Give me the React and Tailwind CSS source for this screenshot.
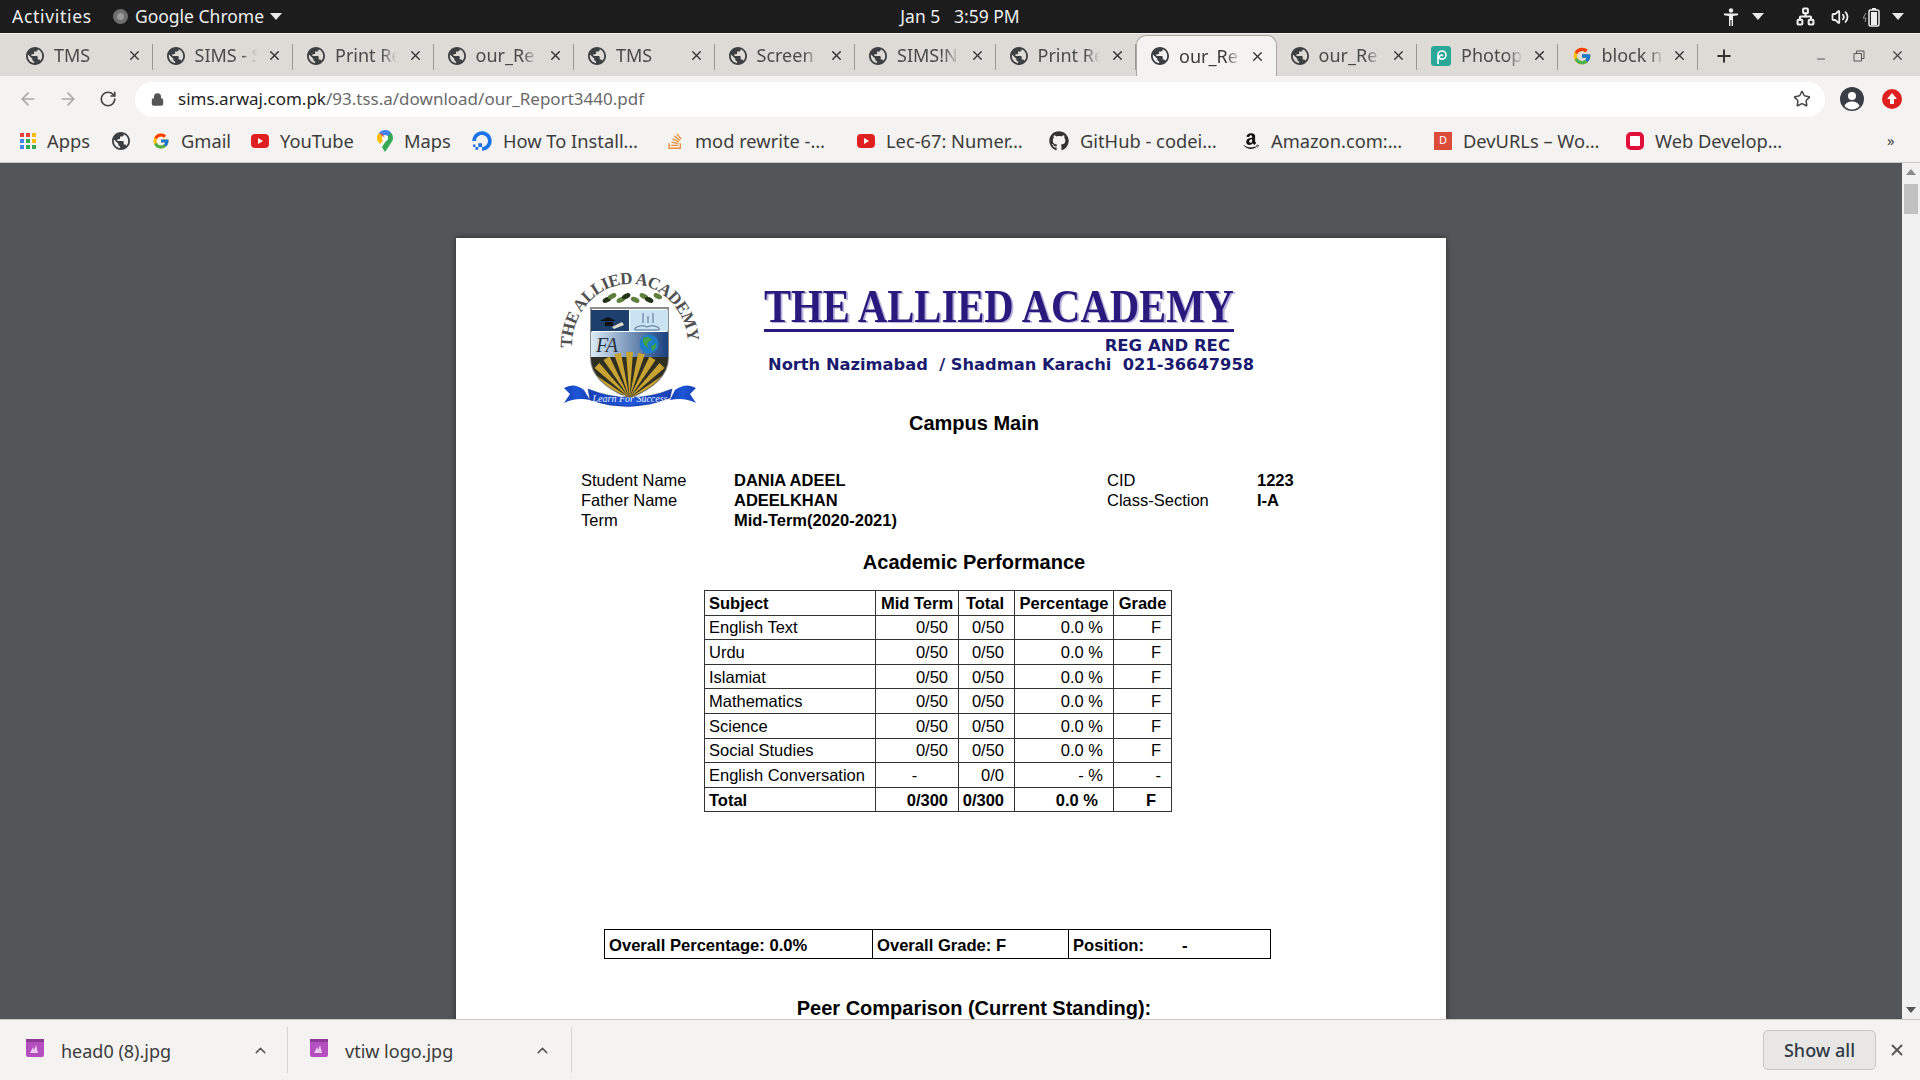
import { ArrowLeft, ArrowRight, RotateCw, Lock, Star, X, Plus, Minus, ChevronUp, Volume2, Network } from 'lucide-react'
import { FcGoogle } from 'react-icons/fc'
import { FaGithub, FaDigitalOcean, FaStackOverflow, FaAmazon } from 'react-icons/fa'

const tabs = ['TMS', 'SIMS - S', 'Print Re', 'our_Re', 'TMS', 'Screen', 'SIMS!N', 'Print Re', 'our_Re', 'our_Re', 'Photop', 'block n']

const rows = [
  ['English Text', '0/50', '0/50', '0.0 %', 'F'],
  ['Urdu', '0/50', '0/50', '0.0 %', 'F'],
  ['Islamiat', '0/50', '0/50', '0.0 %', 'F'],
  ['Mathematics', '0/50', '0/50', '0.0 %', 'F'],
  ['Science', '0/50', '0/50', '0.0 %', 'F'],
  ['Social Studies', '0/50', '0/50', '0.0 %', 'F'],
]

function Globe({ size = 18 }) {
  return (
    <svg width={size} height={size} viewBox="2 2 20 20" fill="#3c4043" className="shrink-0">
      <path d="M12 2C6.48 2 2 6.48 2 12s4.48 10 10 10 10-4.48 10-10S17.52 2 12 2zm-1 17.93c-3.95-.49-7-3.85-7-7.93 0-.62.08-1.21.21-1.79L9 15v1c0 1.1.9 2 2 2v1.93zm6.9-2.54c-.26-.81-1-1.39-1.9-1.39h-1v-3c0-.55-.45-1-1-1H8v-2h2c.55 0 1-.45 1-1V7h2c1.1 0 2-.9 2-2v-.41c2.93 1.19 5 4.06 5 7.41 0 2.08-.8 3.97-2.1 5.39z" />
    </svg>
  )
}

function Caret({ color = '#e8e8e8' }) {
  return (
    <svg width="12" height="7" viewBox="0 0 12 7" className="shrink-0">
      <path d="M0 0h12L6 7z" fill={color} />
    </svg>
  )
}

function YouTubeIcon() {
  return (
    <svg width="18" height="18" viewBox="0 0 18 18" className="shrink-0">
      <rect x="0" y="2" width="18" height="14" rx="4" fill="#e02020" />
      <path d="M7 6l5 3-5 3z" fill="#fff" />
    </svg>
  )
}

function TabIcon({ name }) {
  if (name === 'Photop') {
    return (
      <svg width="20" height="20" viewBox="0 0 20 20" className="shrink-0">
        <rect width="20" height="20" rx="3" fill="#2ba89a" />
        <path d="M7 18V9a4 4 0 1 1 4 4 2 2 0 1 1 1-3" fill="none" stroke="#fff" strokeWidth="1.6" />
      </svg>
    )
  }
  if (name === 'block n') {
    return <FcGoogle size={20} className="shrink-0" />
  }
  return <Globe />
}

function Tab({ name, active }) {
  return (
    <div className={active
      ? 'relative flex items-center h-full w-[140.500px] shrink-0 pl-[14px] pr-[11px] bg-[#f5f3f1] rounded-t-[10px] border border-b-0 border-[#a9a6a1]'
      : 'relative flex items-center h-full w-[140.500px] shrink-0 pl-[14px] pr-[11px]'}>
      <TabIcon name={name} />
      <span className={active
        ? "ml-[10px] w-[62px] overflow-hidden whitespace-nowrap text-[18px] text-[#3b3b3b] [mask-image:linear-gradient(to_right,black_75%,transparent)]"
        : "ml-[10px] w-[62px] overflow-hidden whitespace-nowrap text-[18px] text-[#4a4a4a] [mask-image:linear-gradient(to_right,black_75%,transparent)]"}>
        {name}
      </span>
      <X size={15} strokeWidth={2.2} className="ml-auto text-[#333]" />
      {!active && <span className="absolute right-0 top-[9px] h-[26px] w-px bg-[#9b9893]" />}
    </div>
  )
}

function Bookmark({ icon, label, width }) {
  return (
    <div className={`flex items-center gap-[11px] ${width} shrink-0`}>
      {icon}
      {label && <span className="whitespace-nowrap text-[18.300px] text-[#3c3c3c]">{label}</span>}
    </div>
  )
}

function AppsIcon() {
  const colors = ['#ea4335', '#ea4335', '#fbbc05', '#4285f4', '#34a853', '#fbbc05', '#4285f4', '#34a853', '#34a853']
  return (
    <div className="grid grid-cols-3 gap-[2px] w-[16px] shrink-0">
      {colors.map((c, i) => (
        <svg key={i} width="4" height="4"><rect width="4" height="4" fill={c} /></svg>
      ))}
    </div>
  )
}

function MapsIcon() {
  return (
    <svg width="16" height="22" viewBox="0 0 16 22" className="shrink-0">
      <path d="M8 0a8 8 0 0 1 8 8c0 2-1 3.5-2 5L8 22 5 17l6-9z" fill="#34a853" />
      <path d="M2 3l6 5-5 6C1 12 0 10 0 8c0-2 .8-3.700 2-5z" fill="#fbbc05" />
      <path d="M8 0c2.500 0 4.700 1.100 6.100 3L8 8 2 3C3.400 1.100 5.600 0 8 0z" fill="#4285f4" />
      <circle cx="8" cy="8" r="3" fill="#fff" />
      <path d="M2 3l6 5-2.500-4z" fill="#ea4335" />
    </svg>
  )
}

function ShelfIcon() {
  return (
    <svg width="20" height="20" viewBox="0 0 20 20" className="shrink-0 -mt-[4px]">
      <rect x="1" y="1" width="18" height="18" rx="2" fill="#b44fc0" />
      <rect x="1" y="1" width="18" height="3" fill="#8c3a96" />
      <path d="M5 15l3-6 1 3 2-5 2 8z" fill="#eec8f2" />
    </svg>
  )
}

function CrestLogo() {
  return (
    <svg width="160" height="150" viewBox="0 0 160 150" className="shrink-0">
      <defs>
        <path id="crest-arc" d="M22 88 A58 62 0 0 1 138 84" />
        <linearGradient id="fa-panel" x1="0" x2="1">
          <stop offset="0" stopColor="#dcecf6" />
          <stop offset="1" stopColor="#17407f" />
        </linearGradient>
        <linearGradient id="ribbon" x1="0" x2="1">
          <stop offset="0" stopColor="#1840b8" />
          <stop offset="0.5" stopColor="#1d56d8" />
          <stop offset="1" stopColor="#1840b8" />
        </linearGradient>
        <clipPath id="shield-clip">
          <path d="M41 48H118V98Q118 122 79.500 138Q41 122 41 98Z" />
        </clipPath>
      </defs>
      <text fontFamily="'Liberation Serif', serif" fontWeight="700" fontSize="17" fill="#505050">
        <textPath href="#crest-arc" textLength="186">THE ALLIED ACADEMY</textPath>
      </text>
      {[56, 63, 70, 77, 86, 93, 100, 107].map((x, i) => (
        <ellipse key={x} cx={x} cy={i % 2 ? 36 : 40} rx="4.500" ry="2.500" fill={i % 3 === 0 ? '#23331a' : '#5f7f3c'} transform={`rotate(${i < 4 ? -25 : 25} ${x} 38)`} />
      ))}
      <path d="M41 48H118V98Q118 122 79.500 138Q41 122 41 98Z" fill="#fff" stroke="#8d8d8d" strokeWidth="2" />
      <g clipPath="url(#shield-clip)">
        <rect x="41" y="50" width="38" height="21" fill="#1c3f6d" />
        <rect x="80" y="50" width="38" height="21" fill="#c9e3f3" />
        <rect x="41" y="72" width="77" height="25" fill="url(#fa-panel)" />
        <rect x="41" y="97" width="77" height="42" fill="#2f2f22" />
        {[-60, -45, -30, -15, 0, 15, 30, 45, 60].map(a => (
          <path key={a} d="M79.500 138L76 92H83Z" fill="#c9a332" transform={`rotate(${a} 79.500 138)`} />
        ))}
      </g>
      <path d="M50 61h16l-8-4zM55 62h8v4h-8z" fill="#111" />
      <path d="M62 67l10-5 2 3-10 4z" fill="#e4d8c8" />
      <path d="M85 68q7-4 12-1q6-3 12 1v2H85z" fill="none" stroke="#50708f" />
      <path d="M93 53v10M98 56v7M103 53v10" stroke="#50708f" />
      <text x="46" y="92" fontFamily="'Liberation Serif', serif" fontStyle="italic" fontSize="20" fill="#29323f">FA</text>
      <circle cx="99" cy="84" r="9.500" fill="#1f7ec8" />
      <path d="M93 78q6-3 9 2q-6 1-4 8q-6-3-5-10zM102 91q5-3 4-8q-3 3-5 3z" fill="#3ea04a" />
      <path d="M34 130Q24 122 14 128L20 134 14 143Q26 137 40 140Z" fill="url(#ribbon)" />
      <path d="M125 130Q136 122 146 128L140 134 146 143Q134 137 120 140Z" fill="url(#ribbon)" />
      <path d="M38 129Q80 146 122 129L120 138Q80 154 40 140Z" fill="url(#ribbon)" stroke="#0f2a82" strokeWidth="0.500" />
      <text x="80" y="142" textAnchor="middle" fontFamily="'Liberation Serif', serif" fontStyle="italic" fontSize="10" fill="#e8f0ff">Learn For Success</text>
    </svg>
  )
}

export default function App() {
  return (
    <div className="flex flex-col h-screen w-full overflow-hidden font-['Noto_Sans',sans-serif]">
      {/* Ubuntu top bar */}
      <div className="relative flex items-center h-[33px] shrink-0 bg-[#1c1c1c] text-[#eeeeee] text-[17.500px] pl-[12px]">
        <span className="tracking-[0.7px]">Activities</span>
        <span className="ml-[21px] w-[15px] h-[15px] rounded-full bg-[#9a9a9a] border-[4px] border-[#6f6f6f]" />
        <span className="ml-[7px]">Google Chrome</span>
        <span className="ml-[6px]"><Caret /></span>
        <span className="absolute left-1/2 -translate-x-1/2 whitespace-pre">Jan 5   3:59 PM</span>
        <div className="ml-auto flex items-center pr-[16px]">
          <svg width="14" height="18" viewBox="0 0 14 18">
            <circle cx="7" cy="2.500" r="2.200" fill="#eee" />
            <path d="M0 5.500h14v1.800L9 8v10H7.600v-6H6.400v6H5V8L0 7.300z" fill="#eee" />
          </svg>
          <span className="ml-[14px]"><Caret /></span>
          <Network size={19} strokeWidth={2.6} className="ml-[32px]" />
          <Volume2 size={18} strokeWidth={2.4} className="ml-[16px]" />
          <svg width="18" height="20" viewBox="0 0 18 20" className="ml-[14px]">
            <path d="M3 6L0 11h3l-1 4" fill="none" stroke="#999" />
            <rect x="6" y="3" width="10" height="16" rx="1.500" fill="none" stroke="#eee" strokeWidth="1.500" />
            <rect x="8" y="5" width="6" height="13" fill="#eee" />
            <rect x="9" y="1" width="4" height="2" fill="#eee" />
          </svg>
          <span className="ml-[11px]"><Caret /></span>
        </div>
      </div>

      {/* Tab strip */}
      <div className="flex items-center h-[43px] shrink-0 bg-[#dedbd7] border-t border-[#efefef] pl-[12px] pt-px">
        {tabs.map((t, i) => (
          <Tab key={i} name={t} active={i === 8} />
        ))}
        <Plus size={20} strokeWidth={2.4} className="ml-[16px] text-[#333]" />
        <Minus size={12} className="ml-[81px] mt-[6px] text-[#555]" />
        <svg width="12" height="12" viewBox="0 0 12 12" className="ml-[26px]">
          <path d="M1 3.500h7.500V11H1zM3.500 3.500V1H11v7.500H8.500" fill="none" stroke="#555" />
        </svg>
        <X size={15} className="ml-[25px] text-[#444]" />
      </div>

      {/* Toolbar */}
      <div className="flex items-center h-[46px] shrink-0 bg-[#f5f3f1] pl-[18px]">
        <ArrowLeft size={20} className="text-[#a9a9a9]" />
        <ArrowRight size={20} className="ml-[20px] text-[#a9a9a9]" />
        <RotateCw size={18} strokeWidth={2.2} className="ml-[21px] text-[#444]" />
        <div className="ml-[18px] flex items-center w-[1690px] h-[35px] rounded-full bg-white pl-[16px] pr-[14px]">
          <Lock size={13} strokeWidth={3} className="text-[#555] fill-[#555]" />
          <span className="ml-[14px] text-[17px] text-[#1f1f1f]">sims.arwaj.com.pk</span>
          <span className="text-[17px] text-[#6a6a6a]">/93.tss.a/download/our_Report3440.pdf</span>
          <Star size={18} strokeWidth={2} className="ml-auto text-[#444]" />
        </div>
        <svg width="24" height="24" viewBox="0 0 24 24" className="ml-[15px]">
          <circle cx="12" cy="12" r="12" fill="#3a3f45" />
          <circle cx="12" cy="9" r="4" fill="#fff" />
          <path d="M4.500 19c1.500-3.500 4.500-4.500 7.500-4.500s6 1 7.500 4.500a10 10 0 0 1-15 0z" fill="#fff" />
        </svg>
        <svg width="20" height="20" viewBox="0 0 20 20" className="ml-[18px]">
          <circle cx="10" cy="10" r="10" fill="#e02020" />
          <path d="M10 4l5 6h-3v5H8v-5H5z" fill="#fff" />
        </svg>
      </div>

      {/* Bookmarks */}
      <div className="flex items-center h-[41px] shrink-0 bg-[#f5f3f1] border-b border-[#c9c7c4] pl-[20px] pb-[3px]">
        <Bookmark icon={<AppsIcon />} label="Apps" width="w-[92px]" />
        <Bookmark icon={<Globe />} width="w-[40px]" />
        <Bookmark icon={<FcGoogle size={18} className="shrink-0" />} label="Gmail" width="w-[99px]" />
        <Bookmark icon={<YouTubeIcon />} label="YouTube" width="w-[126px]" />
        <Bookmark icon={<MapsIcon />} label="Maps" width="w-[95px]" />
        <Bookmark icon={<FaDigitalOcean size={20} color="#1a73e8" className="shrink-0" />} label="How To Install…" width="w-[194px]" />
        <Bookmark icon={<FaStackOverflow size={18} color="#e8913a" className="shrink-0" />} label="mod rewrite -…" width="w-[191px]" />
        <Bookmark icon={<YouTubeIcon />} label="Lec-67: Numer…" width="w-[192px]" />
        <Bookmark icon={<FaGithub size={20} color="#333" className="shrink-0" />} label="GitHub - codei…" width="w-[193px]" />
        <Bookmark icon={<FaAmazon size={18} color="#111" className="shrink-0" />} label="Amazon.com:…" width="w-[192px]" />
        <Bookmark
          icon={<span className="flex items-center justify-center w-[18px] h-[18px] bg-[#dd4b39] text-white text-[11px] shrink-0">D</span>}
          label="DevURLs – Wo…"
          width="w-[192px]"
        />
        <Bookmark
          icon={<span className="w-[18px] h-[18px] rounded-[5px] border-[4px] border-[#e0103a] bg-white shrink-0" />}
          label="Web Develop…"
          width="w-[261px]"
        />
        <span className="text-[15px] text-[#444]">»</span>
      </div>

      {/* PDF viewer */}
      <div className="flex flex-1 min-h-0">
        <div className="flex-1 min-w-0 overflow-hidden bg-[#525659] pt-[75px]">
          <div className="mx-auto w-[990px] h-[1400px] bg-white shadow-[0_0_6px_rgba(0,0,0,0.5)] pt-[22px] font-['Liberation_Sans',sans-serif] text-black">
            {/* Letterhead */}
            <div className="flex h-[150px] pl-[94px]">
              <CrestLogo />
              <div className="ml-[54px] w-[500px] pt-[24px]">
                <div className="origin-left scale-x-[0.884] font-['Liberation_Serif',serif] font-bold text-[46px] leading-[46px] whitespace-nowrap text-[#2b1a7d] [text-shadow:2px_1px_0_#b9b4dc]">
                  THE ALLIED ACADEMY
                </div>
                <div className="w-[470px] h-[3px] bg-[#2b1a7d] mt-[-1px]" />
                <div className="w-[466px] text-right font-['DejaVu_Sans',sans-serif] font-bold text-[16.500px] leading-[17px] mt-[5px] text-[#1a1a6e]">REG AND REC</div>
                <div className="ml-[4px] mt-[2px] font-['DejaVu_Sans',sans-serif] font-bold text-[16.300px] leading-[18px] whitespace-pre text-[#1a1a6e]">North Nazimabad  / Shadman Karachi  021-36647958</div>
              </div>
            </div>

            <div className="pl-[46px] text-center font-bold text-[20px] leading-[26px]">Campus Main</div>

            {/* Student details */}
            <div className="mt-[34px] ml-[125px] grid grid-cols-[153px_373px_150px_100px] text-[16.500px] leading-[20px]">
              <span>Student Name</span><span className="font-bold">DANIA ADEEL</span><span>CID</span><span className="font-bold">1223</span>
              <span>Father Name</span><span className="font-bold">ADEELKHAN</span><span>Class-Section</span><span className="font-bold">I-A</span>
              <span>Term</span><span className="font-bold">Mid-Term(2020-2021)</span><span /><span />
            </div>

            <div className="mt-[19px] pl-[46px] text-center font-bold text-[20px] leading-[26px]">Academic Performance</div>

            {/* Marks table */}
            <table className="mt-[15px] ml-[248px] w-[467px] table-fixed border-collapse text-[16.500px] leading-[20px]">
              <colgroup>
                <col className="w-[171px]" />
                <col className="w-[83px]" />
                <col className="w-[56px]" />
                <col className="w-[99px]" />
                <col className="w-[58px]" />
              </colgroup>
              <tbody>
                <tr className="h-[24.600px] font-bold">
                  <td className="border border-[#333] pl-[4px]">Subject</td>
                  <td className="border border-[#333] text-center whitespace-nowrap">Mid Term</td>
                  <td className="border border-[#333] pr-[3px] text-center">Total</td>
                  <td className="border border-[#333] text-center">Percentage</td>
                  <td className="border border-[#333] text-center">Grade</td>
                </tr>
                {rows.map(r => (
                  <tr key={r[0]} className="h-[24.600px]">
                    <td className="border border-[#333] pl-[4px]">{r[0]}</td>
                    <td className="border border-[#333] pr-[10px] text-right">{r[1]}</td>
                    <td className="border border-[#333] pr-[10px] text-right">{r[2]}</td>
                    <td className="border border-[#333] pr-[10px] text-right">{r[3]}</td>
                    <td className="border border-[#333] pr-[10px] text-right">{r[4]}</td>
                  </tr>
                ))}
                <tr className="h-[24.600px]">
                  <td className="border border-[#333] pl-[4px] whitespace-nowrap">English Conversation</td>
                  <td className="border border-[#333] pr-[5px] text-center">-</td>
                  <td className="border border-[#333] pr-[10px] text-right">0/0</td>
                  <td className="border border-[#333] pr-[10px] text-right">- %</td>
                  <td className="border border-[#333] pr-[10px] text-right">-</td>
                </tr>
                <tr className="h-[24.600px] font-bold">
                  <td className="border border-[#333] pl-[4px]">Total</td>
                  <td className="border border-[#333] pr-[10px] text-right">0/300</td>
                  <td className="border border-[#333] pr-[10px] text-right">0/300</td>
                  <td className="border border-[#333] pr-[15px] text-right">0.0 %</td>
                  <td className="border border-[#333] pr-[15px] text-right">F</td>
                </tr>
              </tbody>
            </table>

            {/* Overall result */}
            <div className="mt-[117px] ml-[148px] flex w-[667px] h-[30px] border border-black font-bold text-[16.600px] items-center">
              <div className="w-[268px] h-full flex items-center pl-[4px] pt-[5px] border-r border-black">Overall Percentage: 0.0%</div>
              <div className="w-[196px] h-full flex items-center pl-[4px] pt-[5px] border-r border-black">Overall Grade: F</div>
              <div className="flex-1 flex items-center pl-[4px] pt-[5px]">
                <span>Position:</span>
                <span className="ml-[38px]">-</span>
              </div>
            </div>

            <div className="mt-[36px] pl-[46px] text-center font-bold text-[20px] leading-[26px]">Peer Comparison (Current Standing):</div>
          </div>
        </div>

        {/* Scrollbar */}
        <div className="flex flex-col items-center w-[18px] shrink-0 bg-[#f1f1f1] pt-[6px] pb-[6px]">
          <svg width="10" height="6" viewBox="0 0 10 6"><path d="M5 0l5 6H0z" fill="#8a8a8a" /></svg>
          <div className="mt-[9px] w-[14px] h-[30px] bg-[#c1c1c1]" />
          <svg width="10" height="6" viewBox="0 0 10 6" className="mt-auto"><path d="M0 0h10L5 6z" fill="#555" /></svg>
        </div>
      </div>

      {/* Downloads shelf */}
      <div className="flex items-center h-[61px] shrink-0 bg-[#f5f3f1] border-t border-[#c9c7c4] text-[18px] text-[#3c3c3c]">
        <div className="flex items-center w-[288px] h-[46px] pl-[25px] border-r border-[#d5d3d0]">
          <ShelfIcon />
          <span className="ml-[16px] pt-[2px]">head0 (8).jpg</span>
          <ChevronUp size={17} className="ml-auto mr-[18px] text-[#555]" />
        </div>
        <div className="flex items-center w-[284px] h-[46px] pl-[21px] border-r border-[#d5d3d0]">
          <ShelfIcon />
          <span className="ml-[16px] pt-[2px]">vtiw logo.jpg</span>
          <ChevronUp size={17} className="ml-auto mr-[20px] text-[#555]" />
        </div>
        <div className="ml-auto flex items-center justify-center w-[113px] h-[40px] rounded-[5px] bg-[#e9e7e5] border border-[#c9c7c4] text-[#2f3a46] font-medium">
          Show all
        </div>
        <X size={18} strokeWidth={2.4} className="ml-[12px] mr-[14px] text-[#555]" />
      </div>
    </div>
  )
}
